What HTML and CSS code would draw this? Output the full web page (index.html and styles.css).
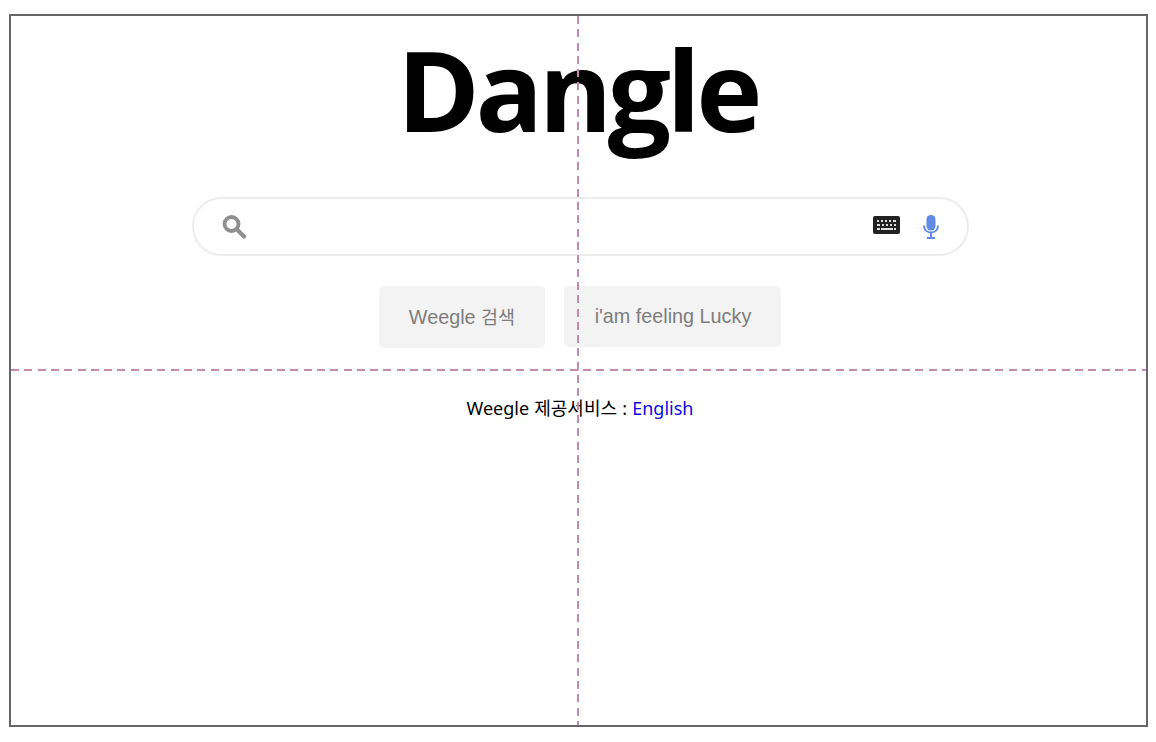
FILE: index.html
```html
<!DOCTYPE html>
<html lang="ko">
  <head>
    <meta charset="UTF-8" />
    <meta name="viewport" content="width=device-width, initial-scale=1.0" />
    <title>Dangle</title>
    <link rel="stylesheet" href="styles.css">
  </head>
  <body>
    <div class="frame">
      <h1 class="logo">Dangle</h1>

      <form class="search-form">
        <div class="search-bar">
          <svg class="icon-search" viewBox="0 0 24 24" width="24" height="24">
            <circle cx="9.500" cy="9" r="7" fill="none" stroke="#8f8f8f" stroke-width="3.800" />
            <path d="M15 14.500l7 7" stroke="#8f8f8f" stroke-width="4.200" stroke-linecap="round" />
          </svg>
          <input class="search-input" type="text" aria-label="search" />
          <svg class="icon-keyboard" viewBox="0 0 27 18" width="27" height="18">
            <rect width="27" height="18" rx="2" fill="#222" />
            <path d="M4 4h2v2H4zM8 4h2v2H8zM12 4h2v2h-2zM16 4h2v2h-2zM20 4h3v2h-3zM4 8h3v2H4zM9 8h2v2H9zM13 8h2v2h-2zM17 8h2v2h-2zM21 8h2v2h-2zM4 12h3v2H4zM8 12h12v2H8zM21 12h2v2h-2z" fill="#ddd" />
          </svg>
          <svg class="icon-mic" viewBox="0 0 18 24" width="18" height="24">
            <rect x="4.500" y="0" width="9" height="15.500" rx="4.500" fill="#5f8ae6" />
            <path d="M2 10.500c0 4.400 3 7 7 7s7-2.600 7-7" fill="none" stroke="#5f8ae6" stroke-width="2" />
            <path d="M9 17v5M5 23h8" stroke="#5f8ae6" stroke-width="2" />
          </svg>
        </div>

        <div class="button-row">
          <button class="btn btn-search" type="button">Weegle <span class="btn-ko">검색</span></button>
          <button class="btn btn-lucky" type="button">i'am feeling Lucky</button>
        </div>
      </form>

      <p class="language">Weegle 제공서비스 : <a href="#">English</a></p>

      <div class="guide guide-v"></div>
      <div class="guide guide-h"></div>
    </div>
  </body>
</html>
```

FILE: styles.css
```css
* {
  box-sizing: border-box;
}
body {
  margin: 0;
  background-color: #fff;
  font-family: "Liberation Sans", Arial, sans-serif;
}
.frame {
  position: relative;
  width: 1139px;
  height: 713px;
  margin: 14px 0 0 9px;
  border: 2px solid #666;
  display: flex;
  flex-direction: column;
  align-items: center;
}
.logo {
  margin: 0 2px 0 0;
  height: 181px;
  font-family: "Open Sans", "Noto Sans", sans-serif;
  font-size: 112px;
  font-weight: 700;
  letter-spacing: -4.500px;
  line-height: 145px;
  color: #000;
}
.search-form {
  display: flex;
  flex-direction: column;
  align-items: center;
  margin-left: 3px;
}
.search-bar {
  display: flex;
  align-items: center;
  width: 777px;
  height: 59px;
  padding: 0 27px 0 28px;
  border: 2px solid #ececec;
  border-radius: 30px;
  background-color: #fff;
}
.search-input {
  flex: 1;
  border: none;
  outline: none;
  height: 30px;
}
.icon-keyboard {
  margin: 0 22px 4px 0;
}
.button-row {
  display: flex;
  align-items: flex-start;
  gap: 19px;
  margin-top: 30px;
}
.btn {
  border: none;
  border-radius: 5px;
  background-color: #f3f3f3;
  color: #7d7d7d;
  font-family: "Liberation Sans", "Noto Sans CJK KR", sans-serif;
  font-size: 19.800px;
}
.btn-ko {
  font-size: 18.500px;
}
.btn-search {
  width: 166px;
  height: 62px;
  padding-bottom: 4px;
}
.btn-lucky {
  width: 217px;
  height: 61px;
  padding-left: 7px;
}
.language {
  margin: 48px 0 0 3px;
  font-family: "Noto Sans", "Noto Sans CJK KR", sans-serif;
  font-size: 18px;
  line-height: 24px;
  word-spacing: 0.500px;
  color: #000;
}
.language a {
  color: #0a0ae6;
  text-decoration: none;
}
.guide {
  position: absolute;
}
.guide-v {
  left: 566px;
  top: 0;
  bottom: 0;
  width: 2px;
  background: repeating-linear-gradient(to bottom, #c48bb0 0, #c48bb0 8px, transparent 8px, transparent 13.300px);
}
.guide-h {
  left: 0;
  right: 0;
  top: 353px;
  height: 2px;
  background: repeating-linear-gradient(to right, #c48bb0 0, #c48bb0 8px, transparent 8px, transparent 13.300px);
}
```
